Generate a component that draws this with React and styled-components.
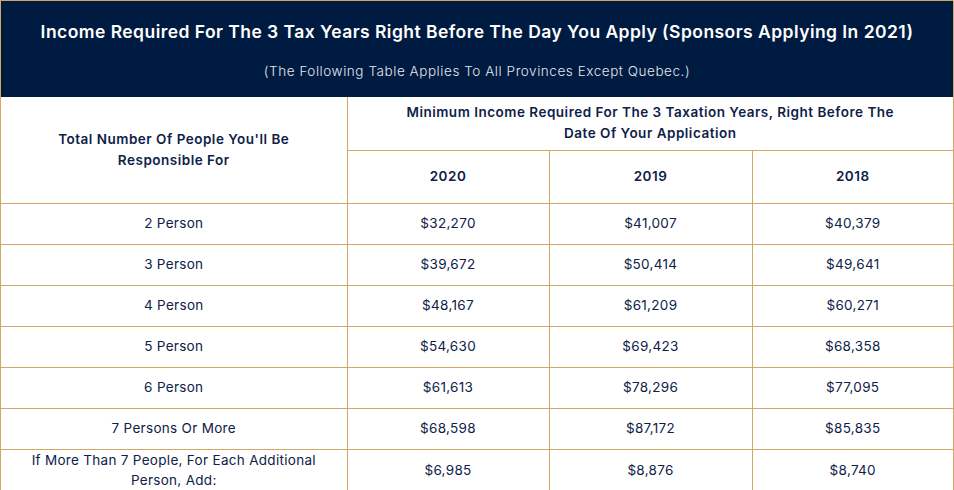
import React from 'react';
import styled, { createGlobalStyle } from 'styled-components';

const GlobalStyle = createGlobalStyle`
  html, body {
    margin: 0;
    padding: 0;
    background: #ffffff;
  }
  body {
    font-family: Inter, "Noto Sans", sans-serif;
  }
`;

const gold = '#d3a763';
const navy = '#001b41';
const ink = '#0e2148';

const Wrapper = styled.div`
  width: 954px;
  box-sizing: border-box;
  border: 1px solid ${gold};
`;

const Banner = styled.div`
  background: ${navy};
  height: 96px;
  display: flex;
  flex-direction: column;
  align-items: center;
  box-sizing: border-box;
  padding-top: 18px;
`;

const Title = styled.h2`
  margin: 0;
  color: #ffffff;
  font-size: 17.5px;
  font-weight: 600;
  line-height: 26px;
  letter-spacing: 0.45px;
`;

const Subtitle = styled.p`
  margin: 16px 0 0;
  color: #e2e6ee;
  font-size: 13.5px;
  font-weight: 300;
  line-height: 20px;
  letter-spacing: 0.55px;
`;

const Table = styled.table`
  width: 100%;
  border-collapse: collapse;
  border-style: hidden;
  table-layout: fixed;
  color: ${ink};
`;

const HeadCell = styled.th`
  border: 1px solid ${gold};
  font-size: 13.5px;
  font-weight: 600;
  line-height: 21px;
  letter-spacing: 0.5px;
  text-align: center;
  vertical-align: middle;
  padding: 0 ${(p) => p.$pad || 10}px;
  height: ${(p) => p.$h || 52}px;
  box-sizing: border-box;
`;

const Cell = styled.td`
  border: 1px solid ${gold};
  font-size: 13.5px;
  font-weight: 400;
  line-height: ${(p) => (p.$tight ? 20 : 21)}px;
  letter-spacing: 0.3px;
  text-align: center;
  vertical-align: middle;
  padding: 0 ${(p) => p.$pad || 10}px;
  height: ${(p) => p.$h || 41}px;
  box-sizing: border-box;
`;

const rows = [
  ['2 Person', '$32,270', '$41,007', '$40,379'],
  ['3 Person', '$39,672', '$50,414', '$49,641'],
  ['4 Person', '$48,167', '$61,209', '$60,271'],
  ['5 Person', '$54,630', '$69,423', '$68,358'],
  ['6 Person', '$61,613', '$78,296', '$77,095'],
  ['7 Persons Or More', '$68,598', '$87,172', '$85,835'],
  ['If More Than 7 People, For Each Additional Person, Add:', '$6,985', '$8,876', '$8,740'],
];

export default function App() {
  return (
    <>
      <GlobalStyle />
      <Wrapper>
        <Banner>
          <Title>Income Required For The 3 Tax Years Right Before The Day You Apply (Sponsors Applying In 2021)</Title>
          <Subtitle>(The Following Table Applies To All Provinces Except Quebec.)</Subtitle>
        </Banner>
        <Table>
          <colgroup>
            <col style={{ width: '346px' }} />
            <col style={{ width: '202px' }} />
            <col style={{ width: '203px' }} />
            <col />
          </colgroup>
          <thead>
            <tr>
              <HeadCell rowSpan={2} $pad={40}>Total Number Of People You'll Be Responsible For</HeadCell>
              <HeadCell colSpan={3} $pad={50} $h={53}>Minimum Income Required For The 3 Taxation Years, Right Before The Date Of Your Application</HeadCell>
            </tr>
            <tr>
              <HeadCell $h={53}>2020</HeadCell>
              <HeadCell $h={53}>2019</HeadCell>
              <HeadCell $h={53}>2018</HeadCell>
            </tr>
          </thead>
          <tbody>
            {rows.map((r, i) => {
              const last = i === rows.length - 1;
              return (
                <tr key={i}>
                  {r.map((v, j) => (
                    <Cell key={j} $h={last ? 40 : 41} $tight={last} $pad={j === 0 ? 20 : 10}>
                      {v}
                    </Cell>
                  ))}
                </tr>
              );
            })}
          </tbody>
        </Table>
      </Wrapper>
    </>
  );
}
